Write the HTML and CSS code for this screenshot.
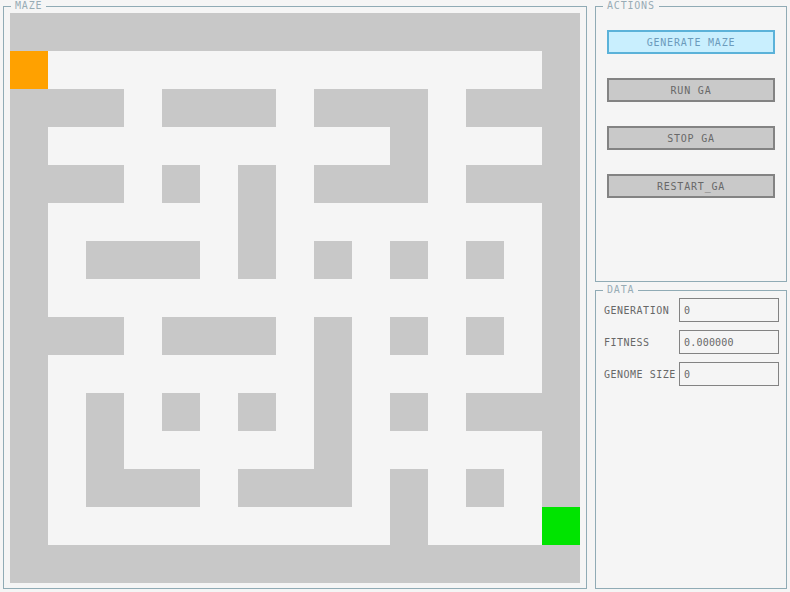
FILE: index.html
```html
<!DOCTYPE html>
<html>
<head>
<meta charset="utf-8">
<title>Maze GA</title>
<link rel="stylesheet" href="styles.css">
</head>
<body>
<div class="app">
  <section class="group maze-group">
    <span class="group-title">MAZE</span>
    <div class="maze">
      <div class="w"></div><div class="w"></div><div class="w"></div><div class="w"></div><div class="w"></div><div class="w"></div><div class="w"></div><div class="w"></div><div class="w"></div><div class="w"></div><div class="w"></div><div class="w"></div><div class="w"></div><div class="w"></div><div class="w"></div>
      <div class="s"></div><div class="p"></div><div class="p"></div><div class="p"></div><div class="p"></div><div class="p"></div><div class="p"></div><div class="p"></div><div class="p"></div><div class="p"></div><div class="p"></div><div class="p"></div><div class="p"></div><div class="p"></div><div class="w"></div>
      <div class="w"></div><div class="w"></div><div class="w"></div><div class="p"></div><div class="w"></div><div class="w"></div><div class="w"></div><div class="p"></div><div class="w"></div><div class="w"></div><div class="w"></div><div class="p"></div><div class="w"></div><div class="w"></div><div class="w"></div>
      <div class="w"></div><div class="p"></div><div class="p"></div><div class="p"></div><div class="p"></div><div class="p"></div><div class="p"></div><div class="p"></div><div class="p"></div><div class="p"></div><div class="w"></div><div class="p"></div><div class="p"></div><div class="p"></div><div class="w"></div>
      <div class="w"></div><div class="w"></div><div class="w"></div><div class="p"></div><div class="w"></div><div class="p"></div><div class="w"></div><div class="p"></div><div class="w"></div><div class="w"></div><div class="w"></div><div class="p"></div><div class="w"></div><div class="w"></div><div class="w"></div>
      <div class="w"></div><div class="p"></div><div class="p"></div><div class="p"></div><div class="p"></div><div class="p"></div><div class="w"></div><div class="p"></div><div class="p"></div><div class="p"></div><div class="p"></div><div class="p"></div><div class="p"></div><div class="p"></div><div class="w"></div>
      <div class="w"></div><div class="p"></div><div class="w"></div><div class="w"></div><div class="w"></div><div class="p"></div><div class="w"></div><div class="p"></div><div class="w"></div><div class="p"></div><div class="w"></div><div class="p"></div><div class="w"></div><div class="p"></div><div class="w"></div>
      <div class="w"></div><div class="p"></div><div class="p"></div><div class="p"></div><div class="p"></div><div class="p"></div><div class="p"></div><div class="p"></div><div class="p"></div><div class="p"></div><div class="p"></div><div class="p"></div><div class="p"></div><div class="p"></div><div class="w"></div>
      <div class="w"></div><div class="w"></div><div class="w"></div><div class="p"></div><div class="w"></div><div class="w"></div><div class="w"></div><div class="p"></div><div class="w"></div><div class="p"></div><div class="w"></div><div class="p"></div><div class="w"></div><div class="p"></div><div class="w"></div>
      <div class="w"></div><div class="p"></div><div class="p"></div><div class="p"></div><div class="p"></div><div class="p"></div><div class="p"></div><div class="p"></div><div class="w"></div><div class="p"></div><div class="p"></div><div class="p"></div><div class="p"></div><div class="p"></div><div class="w"></div>
      <div class="w"></div><div class="p"></div><div class="w"></div><div class="p"></div><div class="w"></div><div class="p"></div><div class="w"></div><div class="p"></div><div class="w"></div><div class="p"></div><div class="w"></div><div class="p"></div><div class="w"></div><div class="w"></div><div class="w"></div>
      <div class="w"></div><div class="p"></div><div class="w"></div><div class="p"></div><div class="p"></div><div class="p"></div><div class="p"></div><div class="p"></div><div class="w"></div><div class="p"></div><div class="p"></div><div class="p"></div><div class="p"></div><div class="p"></div><div class="w"></div>
      <div class="w"></div><div class="p"></div><div class="w"></div><div class="w"></div><div class="w"></div><div class="p"></div><div class="w"></div><div class="w"></div><div class="w"></div><div class="p"></div><div class="w"></div><div class="p"></div><div class="w"></div><div class="p"></div><div class="w"></div>
      <div class="w"></div><div class="p"></div><div class="p"></div><div class="p"></div><div class="p"></div><div class="p"></div><div class="p"></div><div class="p"></div><div class="p"></div><div class="p"></div><div class="w"></div><div class="p"></div><div class="p"></div><div class="p"></div><div class="g"></div>
      <div class="w"></div><div class="w"></div><div class="w"></div><div class="w"></div><div class="w"></div><div class="w"></div><div class="w"></div><div class="w"></div><div class="w"></div><div class="w"></div><div class="w"></div><div class="w"></div><div class="w"></div><div class="w"></div><div class="w"></div>
    </div>
  </section>
  <div class="side">
    <section class="group actions-group">
      <span class="group-title">ACTIONS</span>
      <button class="btn btn-focused">GENERATE MAZE</button>
      <button class="btn">RUN GA</button>
      <button class="btn">STOP GA</button>
      <button class="btn">RESTART_GA</button>
    </section>
    <section class="group data-group">
      <span class="group-title">DATA</span>
      <div class="data-row"><span class="data-label">GENERATION</span><span class="data-box">0</span></div>
      <div class="data-row"><span class="data-label">FITNESS</span><span class="data-box">0.000000</span></div>
      <div class="data-row"><span class="data-label">GENOME SIZE</span><span class="data-box">0</span></div>
    </section>
  </div>
</div>
</body>
</html>
```
FILE: styles.css
```css
* { box-sizing: border-box; }
html, body {
  margin: 0;
  padding: 0;
  background: #f5f5f5;
}
body {
  width: 790px;
  height: 592px;
  overflow: hidden;
  font-family: "DejaVu Sans Mono", "Liberation Mono", monospace;
  font-size: 10px;
  letter-spacing: 0.8px;
  color: #686868;
}
.app {
  display: flex;
  gap: 8px;
  padding: 6px 0 0 3px;
}
.group {
  position: relative;
  border: 1px solid #90abb5;
  background: #f5f5f5;
}
.group-title {
  position: absolute;
  top: -7px;
  left: 7px;
  padding: 0 4px;
  line-height: 12px;
  background: #f5f5f5;
  color: #98acb5;
}
.maze-group {
  width: 584px;
  height: 583px;
  padding: 6px 6px 5px 6px;
}
.maze {
  display: grid;
  grid-template-columns: repeat(15, 38px);
  grid-template-rows: repeat(15, 38px);
}
.w { background: #c8c8c8; }
.p { background: #f5f5f5; }
.s { background: #ffa100; }
.g { background: #00e400; }
.side {
  display: flex;
  flex-direction: column;
  gap: 8px;
  width: 192px;
}
.actions-group {
  height: 276px;
  padding: 23px 11px 0 11px;
  display: flex;
  flex-direction: column;
  gap: 24px;
}
.btn {
  height: 24px;
  width: 168px;
  border: 2px solid #838383;
  background: #c9c9c9;
  color: #686868;
  font: inherit;
  letter-spacing: inherit;
  padding: 0;
  display: flex;
  align-items: center;
  justify-content: center;
}
.btn-focused {
  border-color: #5bb2d9;
  background: #c9effe;
  color: #6c9bbc;
}
.data-group {
  height: 299px;
  padding: 7px 0 0 8px;
  display: flex;
  flex-direction: column;
  gap: 8px;
}
.data-row {
  display: flex;
  align-items: center;
  height: 24px;
}
.data-label {
  width: 75px;
  white-space: nowrap;
  letter-spacing: 0.5px;
}
.data-box {
  width: 100px;
  height: 24px;
  border: 1px solid #838383;
  background: #f5f5f5;
  padding-left: 4px;
  display: flex;
  align-items: center;
  letter-spacing: 0.2px;
}
```
